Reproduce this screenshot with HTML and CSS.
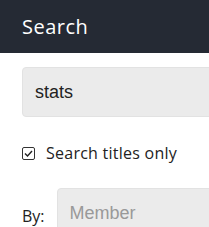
FILE: index.html
```html
<!DOCTYPE html>
<html lang="en">
<head>
  <meta charset="UTF-8" />
  <title>Search</title>
  <link rel="stylesheet" href="styles.css">
</head>
<body>
  <div class="header">
    <span class="header-title">Search</span>
  </div>
  <div class="content">
    <div class="field">
      <input type="text" class="keywords" value="stats" />
    </div>
    <label class="check">
      <span class="box">
        <svg width="9" height="7" viewBox="0 0 9 7"><path d="M1 3.5 L3.5 6 L8 1" fill="none" stroke="#222" stroke-width="1.4"/></svg>
      </span>
      Search titles only
    </label>
    <div class="by-row">
      <span class="by-label">By:</span>
      <input type="text" class="member" placeholder="Member" />
    </div>
  </div>
</body>
</html>
```

FILE: styles.css
```css
body { margin: 0; background: #fff; font-family: "Open Sans", sans-serif; overflow: hidden; }
.header {
  background: #252a34;
  height: 53px;
  display: flex;
  align-items: center;
  padding-left: 22px;
}
.header-title {
  color: #fff;
  font-size: 20px;
  font-weight: 500;
  letter-spacing: 0.5px;
}
.content {
  padding: 14px 0 0 22px;
  overflow: hidden;
}
.field { display: flex; }
input {
  border: 1px solid #e2e2e2;
  background: #ebebeb;
  border-radius: 4px;
  font-family: "Liberation Sans", Arial, sans-serif;
  font-size: 18px;
  color: #222;
  outline: none;
  box-sizing: border-box;
  flex-shrink: 0;
}
.keywords {
  width: 200px;
  height: 50px;
  padding: 0 12px;
}
.check {
  display: flex;
  align-items: center;
  height: 22px;
  margin-top: 25px;
  font-size: 16px;
  letter-spacing: 0.25px;
  color: #222;
}
.box {
  width: 11px;
  height: 11px;
  border: 1px solid #333;
  border-radius: 2px;
  display: flex;
  align-items: center;
  justify-content: center;
  margin-right: 11px;
}
.by-row {
  display: flex;
  align-items: flex-start;
  margin-top: 24px;
}
.by-label {
  font-size: 16px;
  color: #222;
  margin-top: 17px;
  margin-right: 12px;
}
.member {
  width: 170px;
  height: 50px;
  padding: 0 12px;
  font-size: 18px;
}
.member::placeholder { color: #999; }
```
